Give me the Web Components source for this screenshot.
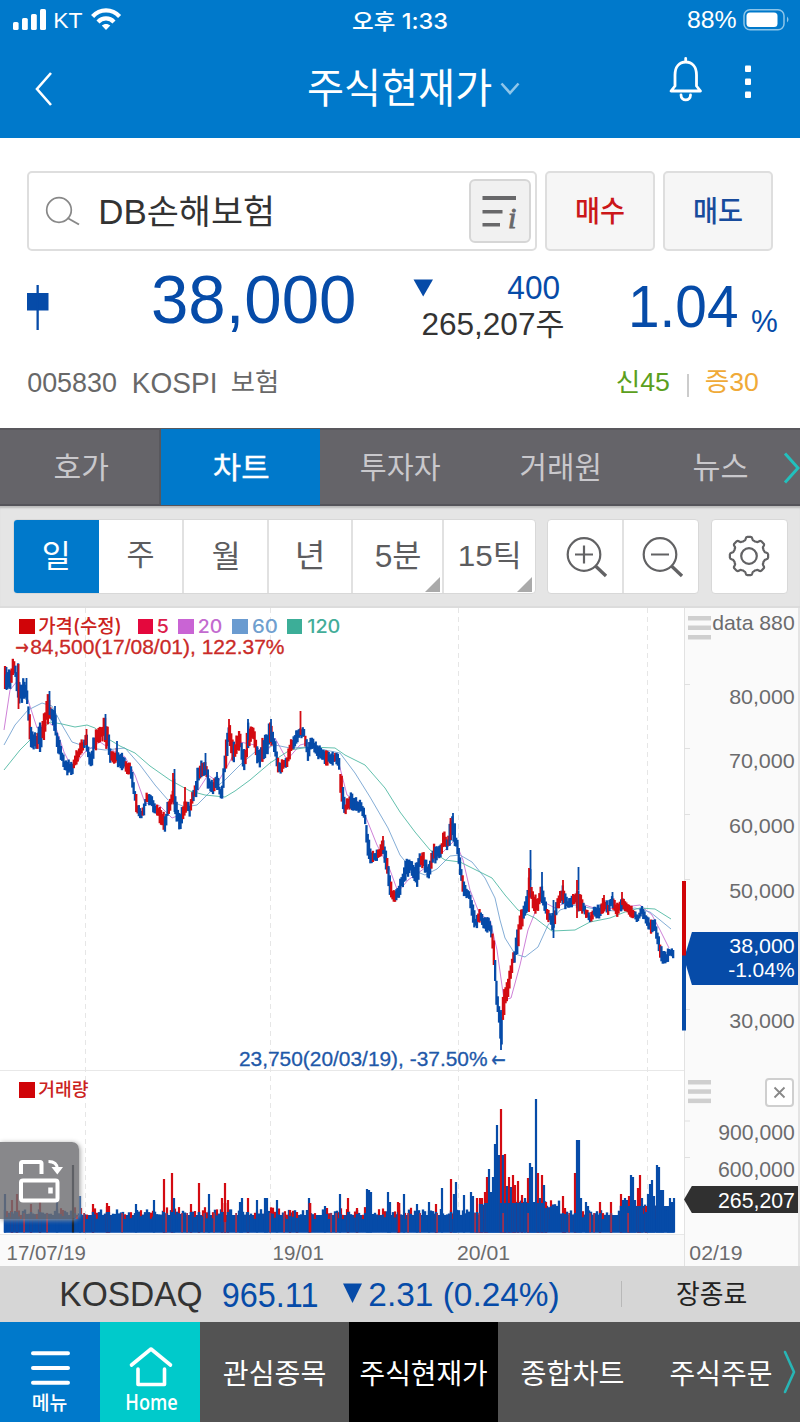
<!DOCTYPE html>
<html lang="ko">
<head>
<meta charset="utf-8">
<title>주식현재가</title>
<style>
html,body{margin:0;padding:0;background:#fff}
body{width:800px;height:1422px;overflow:hidden;font-family:"Liberation Sans","Noto Sans CJK KR",sans-serif;color:#333}
</style>
</head>
<body>
<stock-app></stock-app>
<script>
const element = (name, html, setup) => {
  const tpl = document.createElement('template');
  tpl.innerHTML = html;
  customElements.define(name, class extends HTMLElement {
    constructor() {
      super();
      this.attachShadow({ mode: 'open' }).appendChild(tpl.content.cloneNode(true));
    }
    connectedCallback() { if (setup) setup(this, this.shadowRoot); }
  });
};
const ctx = document.createElement('canvas').getContext('2d');

/* Label whose layout box is the visible extent of its glyphs.
   w/h: glyph extent, dx/dy: distance from the preceding item and from the row's top. */
element('ink-label', `
<style>
:host{display:block;flex:none;overflow:visible}
span{display:block;white-space:pre;width:max-content;transform-origin:0 0;line-height:1}
i{display:inline-block;width:0;height:0}
</style><span><i></i><slot></slot></span>`, (host, root) => {
  const a = n => parseFloat(host.getAttribute(n) || 0);
  const span = root.querySelector('span'), cs = getComputedStyle(host), text = host.textContent;
  ctx.font = `${cs.fontStyle} ${cs.fontWeight} 100px ${cs.fontFamily}`;
  const m = ctx.measureText(text), w = a('w'), h = a('h');
  const size = h / (m.actualBoundingBoxAscent + m.actualBoundingBoxDescent) * 100;
  const inkW = (m.actualBoundingBoxLeft + m.actualBoundingBoxRight) * size / 100;
  host.style.width = w + 'px';
  host.style.height = h + 'px';
  if (host.hasAttribute('dx')) host.style.marginLeft = a('dx') + 'px';
  if (host.hasAttribute('dy')) host.style.marginTop = a('dy') + 'px';
  span.style.fontSize = size + 'px';
  const base = root.querySelector('i').getBoundingClientRect().bottom - span.getBoundingClientRect().top;
  const s = w / inkW;
  span.style.transform = `translate(${m.actualBoundingBoxLeft * size / 100 * s}px,${m.actualBoundingBoxAscent * size / 100 - base}px) scaleX(${s})`;
});

element('app-header', `
<style>
:host{display:flex;flex-direction:column;height:138px;background:#0079cb;color:#fff}
.status,.title{display:flex;align-items:flex-start;height:40px}
.title{height:98px}
svg{flex:none;display:block}
</style>
<div class="status">
<svg width="50" height="40" fill="#fff"><rect x="13" y="22" width="5.6" height="8" rx="1.6"/><rect x="22" y="18" width="5.8" height="12" rx="1.6"/><rect x="31" y="14" width="5.8" height="16" rx="1.6"/><rect x="40" y="9" width="6" height="21" rx="1.6"/></svg>
<ink-label w="27" h="15.5" dx="5" dy="12.5">KT</ink-label>
<svg width="32" height="40" style="margin-left:8px" fill="none" stroke="#fff" stroke-width="4.2"><path d="M2.6 16.5C10 8.3 22 8.3 29.600 16.500"/><path d="M8 22C12.500 17.300 19.500 17.300 24 22"/><path d="M11.800 25.600C14 23.300 18.200 23.300 20.300 25.600L16 30Z" fill="#fff" stroke="none"/></svg>
<ink-label w="94" h="20.500" dx="231" dy="10" style="font-family:Inter,'Noto Sans CJK KR',sans-serif;font-weight:500">오후 1:33</ink-label>
<ink-label w="48" h="16.500" dx="241" dy="12">88%</ink-label>
<svg width="56" height="40" style="margin-left:6px"><rect x="2" y="9.800" width="40" height="20" rx="6" fill="none" stroke="#8cc5e9" stroke-width="1.500"/><rect x="4.500" y="12.500" width="31" height="14.500" rx="3.500" fill="#fff"/><path d="M45 16.500q3 3 0 6z" fill="#8cc5e9"/></svg>
</div>
<div class="title">
<svg width="60" height="98" fill="none" stroke="#fff" stroke-width="2.600"><path d="M51 33L37 49L51 65"/></svg>
<ink-label w="182" h="38" dx="249" dy="29" style="font-family:'Noto Sans CJK KR',sans-serif;font-weight:400">주식현재가</ink-label>
<svg width="30" height="98" style="margin-left:4px" fill="none" stroke="#8fc6ea" stroke-width="2.600"><path d="M6.500 43.500L15 53L23.500 43.500"/></svg>
<svg width="50" height="98" style="margin-left:135px" fill="none" stroke="#fff" stroke-width="2.800" stroke-linecap="round" stroke-linejoin="round"><path d="M25.700 18.500V22M11 51H40.500L36.500 46V35C36.500 26.500 32 22 25.700 22C19.500 22 15 26.500 15 35V46Z"/><path d="M21 55C21 61.500 30.500 61.500 30.500 55"/></svg>
<svg width="40" height="98" style="margin-left:25px" fill="#fff"><rect x="10" y="25.500" width="6" height="6.500" rx="1"/><rect x="10" y="38.500" width="6" height="6.500" rx="1"/><rect x="10" y="51.500" width="6" height="6.500" rx="1"/></svg>
</div>`);

element('quote-panel', `
<style>
:host{display:flex;flex-direction:column;height:290px;background:#fff;color:#333}
.search{display:flex;gap:8px;margin:33px 0 0 27px;height:80px;width:746px}
.box,.btn{box-sizing:border-box;border:2px solid #dedede;border-radius:5px;display:flex;align-items:flex-start;font-weight:500}
.box{width:510.500px;font-weight:400}
.btn{width:110px;background:#f6f6f6;justify-content:center;align-items:center}
.info{box-sizing:border-box;width:62px;height:64px;margin:6px 0 0 197.500px;border:2px solid #d6d6d6;border-radius:6px;background:#f1f1f1;flex:none}
.price{display:flex;align-items:flex-start;height:109px;padding-left:27px;color:#064ba8}
.mid{width:150px;height:70px;margin-left:58.500px;flex:none}
.line{display:flex;align-items:flex-start;height:36px}
.meta{display:flex;align-items:flex-start;color:#686868;height:60px;padding-left:28px}
svg{display:block;flex:none}
.sep{width:2px;height:23px;background:#ccc;margin:14px 0 0 17.500px}
</style>
<div class="search">
<div class="box">
<svg width="56" height="70" fill="none" stroke="#888" stroke-width="1.700"><circle cx="30" cy="37" r="12.300"/><path d="M38.500 45L50 51.500" stroke-width="2"/></svg>
<ink-label w="170" h="32" dx="16" dy="22" style="font-weight:400">DB손해보험</ink-label>
<div class="info"><svg width="58" height="60" fill="#68686a"><rect x="11.500" y="15" width="33.500" height="4"/><rect x="11.500" y="29" width="20" height="3.500"/><rect x="11.500" y="42" width="17.500" height="3.500"/><text x="37" y="46.500" font-family="Liberation Serif" font-style="italic" font-weight="400" font-size="30" stroke="#68686a" stroke-width=".9">i</text></svg></div>
</div>
<div class="btn"><ink-label w="47" h="27" style="color:#cb1719">매수</ink-label></div>
<div class="btn"><ink-label w="47" h="27" style="color:#184b9c">매도</ink-label></div>
</div>
<div class="price">
<svg width="22" height="90" fill="#064ba8"><rect x="0" y="42" width="21.500" height="17.500"/><rect x="9.500" y="34" width="2.300" height="45"/></svg>
<ink-label w="201" h="57" dx="104" dy="24">38,000</ink-label>
<div class="mid"><div class="line"><svg width="20" height="50" fill="#064ba8"><path d="M.5 28.500H20L10.200 45.500Z"/></svg><ink-label w="51" h="23" dx="75" dy="25">400</ink-label></div>
<div class="line"><ink-label w="140" h="28" dx="10.500" dy="24" style="color:#333">265,207주</ink-label></div></div>
<ink-label w="105" h="42.500" dx="69.500" dy="34">1.04</ink-label>
<ink-label w="25" h="22.500" dx="14.500" dy="58.500">%</ink-label>
</div>
<div class="meta">
<ink-label w="88" h="20" dy="12.300">005830</ink-label>
<ink-label w="81" h="21" dx="18" dy="11.500">KOSPI</ink-label>
<ink-label w="44" h="23" dx="17" dy="10">보험</ink-label>
<ink-label w="52" h="23" dx="341" dy="10" style="color:#5b9f20">신45</ink-label>
<div class="sep"></div>
<ink-label w="52" h="23" dx="17.500" dy="10" style="color:#f0aa38">증30</ink-label>
</div>`);

element('section-tabs', `
<style>
:host{display:grid;grid-template-columns:161px 159px 160px 160px 160px;height:78px;background:#656469;color:#c9c8cc;position:relative;box-sizing:border-box;border-top:2px solid #59585d;border-bottom:2px solid #55545a;font-family:"Noto Sans CJK KR",sans-serif}
div{display:flex;align-items:center;justify-content:center}
.on{background:#0079cb;color:#fff;margin:-1px 0;font-weight:400}
svg{position:absolute;right:0;top:22px}
</style>
<div style="border-right:2px solid #59585d;box-sizing:border-box;padding-left:4px"><ink-label w="53" h="28">호가</ink-label></div>
<div class="on"><ink-label w="54" h="28" style="-webkit-text-stroke:.4px #fff">차트</ink-label></div>
<div><ink-label w="79" h="28">투자자</ink-label></div>
<div><ink-label w="78" h="28">거래원</ink-label></div>
<div><ink-label w="53" h="27">뉴스</ink-label></div>
<svg width="17" height="34" fill="none" stroke="#22c0bd" stroke-width="3"><path d="M2 1.500L15 16L2 30.500"/></svg>`);

element('chart-toolbar', `
<style>
:host{display:flex;height:102px;background:#e5e5e5;color:#5c5c5e;box-sizing:border-box;padding:12.500px 0 0 13px;border-bottom:2px solid #dcdcdc;box-shadow:inset 0 3px 2px -1px #bbb;font-family:"Liberation Sans","Noto Sans CJK KR",sans-serif}
.g{display:flex;height:75.500px;box-sizing:border-box;border:1.500px solid #d8d8d8;border-radius:4px;background:#fff;overflow:hidden}
.g>div{display:flex;align-items:center;justify-content:center;border-right:2px solid #e1e1e1;box-sizing:border-box;position:relative;height:100%}
.g>div:last-child{border-right:0}
.g .on{background:#0079cb;color:#fff;border-color:#0079cb}
.m::after{content:"";position:absolute;right:2px;bottom:1.500px;border:solid transparent;border-width:0 0 15.500px 15.500px;border-bottom-color:#aaa}
ink-label{position:relative;top:-1px}
svg{display:block;fill:none;stroke:#626264;stroke-width:2.200}
.z svg{margin:3px 0 0 4px}
</style>
<div class="g" style="width:523px">
<div class="on" style="width:85px"><ink-label w="24" h="28">일</ink-label></div>
<div style="width:85px"><ink-label w="25" h="26">주</ink-label></div>
<div style="width:84.500px"><ink-label w="24.500" h="28">월</ink-label></div>
<div style="width:84.500px"><ink-label w="24" h="28">년</ink-label></div>
<div class="m" style="width:91px"><ink-label w="44" h="27">5분</ink-label></div>
<div class="m" style="width:90px"><ink-label w="58" h="28">15틱</ink-label></div>
</div>
<div class="g z" style="width:152px;margin-left:11px">
<div style="width:75.500px"><svg width="44" height="44"><circle cx="19" cy="18.500" r="16.300"/><path d="M30.500 30L41 40" stroke-width="3.300"/><path d="M10 18.500H28M19 9.500V27.500"/></svg></div>
<div style="width:74px"><svg width="44" height="44"><circle cx="19" cy="18.500" r="16.300"/><path d="M30.500 30L41 40" stroke-width="3.300"/><path d="M10 18.500H28"/></svg></div>
</div>
<div class="g" style="width:77px;margin-left:12px"><div style="width:74px"><svg class="gear" width="44" height="44"><path stroke-linejoin="round"/><circle cx="22" cy="22" r="7.800"/></svg></div></div>`,
(host, root) => {
  let d = '';
  for (let i = 0; i < 8; i++) {
    const pt = (deg, r) => { const t = (i * 45 + deg - 90) * Math.PI / 180; return (22 + r * Math.cos(t)).toFixed(2) + ' ' + (22 + r * Math.sin(t)).toFixed(2); };
    d += (i ? 'L' : 'M') + pt(-11, 17.500) + 'Q' + pt(-9, 19.200) + ' ' + pt(-5, 19.200) + 'L' + pt(5, 19.200) + 'Q' + pt(9, 19.200) + ' ' + pt(11, 17.500) + 'Q' + pt(13, 15.800) + ' ' + pt(18, 16) + 'Q' + pt(22.500, 15.300) + ' ' + pt(27, 16) + 'Q' + pt(32, 15.800) + ' ' + pt(34, 17.500);
  }
  root.querySelector('.gear path').setAttribute('d', d + 'Z');
});

/* x high low : daily range of the price, in chart pixels */
const RANGE = `5 667 692 8 670 690 11 668 688 13 656 680 15 660 675 18 664 708 20 675 705 24 680 708 26 678 700 28 695 718 30 712 745 33 735 752 37 730 752 40 722 753 43 718 745 46 700 730 49 692 720 52 710 723 55 707 735 57 730 750 61 745 760 65 760 772 69 757 776 72 762 777 76 752 768 80 742 758 84 738 752 86 730 745 89 745 765 91 752 770 94 735 758 97 728 745 101 727 740 104 715 745 107 722 750 110 742 762 113 750 768 117 745 765 120 753 770 124 753 770 127 760 773 131 765 780 134 778 800 137 800 815 141 810 822 144 800 815 147 792 803 151 795 808 155 803 815 158 805 818 162 810 830 165 815 833 168 800 818 171 792 808 174 775 812 177 805 822 180 812 832 183 800 822 187 800 810 190 805 818 192 790 810 196 775 798 199 760 785 203 762 778 205 755 775 208 770 790 211 780 797 214 778 795 217 773 788 220 785 798 222 785 803 224 760 785 226 728 770 229 720 740 232 730 765 235 740 765 238 728 750 240 730 750 243 745 770 245 750 770 248 720 755 251 721 745 254 728 742 257 740 765 259 750 768 263 735 762 267 730 755 270 720 748 272 722 745 275 740 755 277 750 770 280 760 778 283 758 770 287 755 770 290 738 758 293 735 752 297 728 742 300 726 740 304 728 740 308 745 762 311 730 750 315 740 755 319 745 760 325 750 765 330 753 765 335 752 765 339 755 770 341 770 805 345 802 815 351 792 810 356 798 810 362 800 815 365 812 822 367 830 857 372 850 865 376 850 862 380 845 857 383 836 855 387 855 880 390 875 895 393 890 903 398 887 900 402 870 890 406 857 880 410 860 873 413 862 878 417 862 887 420 850 870 424 853 870 428 865 880 430 860 875 434 842 865 438 845 860 441 842 858 444 830 850 448 838 850 450 820 845 453 812 840 456 832 850 459 850 865 461 865 885 465 885 900 469 892 900 472 898 920 475 915 932 480 905 922 483 918 930 487 915 932 490 920 935 493 932 952 495 955 985 497 985 1015 499 1000 1022 501 1012 1050 503 990 1033 505 985 1003 508 975 1000 511 965 980 513 952 968 515 945 965 517 930 958 520 910 935 523 908 925 526 898 915 528 880 910 530 868 898 532 885 905 535 895 915 538 895 910 541 880 900 543 885 905 547 905 922 550 910 925 553 915 937 557 895 912 560 890 908 563 885 905 565 893 908 568 900 910 573 895 908 575 890 905 577 888 912 579 885 910 582 892 915 586 908 918 590 915 923 594 905 918 600 905 918 604 895 912 608 903 915 612 892 908 617 903 917 622 895 910 627 903 912 631 905 918 635 910 920 638 915 922 642 905 915 646 915 925 650 920 932 655 920 935 658 935 945 660 940 958 663 952 966 667 950 964 670 947 957 674 950 961`.split(' ').map(Number);
const SPIKES = [[6.5,667,690,1],[18.5,664,709,0],[26.5,678,700,1],[49.500,691,715,1],[55,706,730,1],[86.500,729,745,0],[105.500,714,740,1],[117,741,760,1],[174.500,769,812,1],[173,773,800,0],[185,787,805,0],[205.500,753,775,1],[217,772,790,1],[229,719,740,0],[248,719,740,1],[271,719,742,1],[300.500,711,735,0],[383,836,850,0],[453,813,835,1],[450.500,818,840,0],[501,1010,1050,1],[530.500,850,880,1],[529,868,912,0],[542,872,890,1],[553.500,900,938,1],[563,880,900,0],[578.500,867,890,1],[577,880,918,0],[604,895,910,0],[612.500,892,908,1],[622,892,905,0]];
const MA = {
'#c66bd0':'4,730 10,690 18,680 28,700 37,728 48,722 56,728 64,752 72,768 85,752 100,742 112,750 125,757 135,775 145,803 160,806 172,818 185,813 195,795 208,775 218,782 228,765 240,742 255,745 265,755 275,738 287,760 300,745 312,742 325,755 338,760 347,795 360,803 367,820 377,845 390,870 398,892 408,880 425,868 440,855 455,840 463,860 470,890 480,915 490,920 497,950 504,1000 511,998 520,965 528,930 540,900 555,908 570,900 600,910 640,905 652,915 660,930 669,948',
'#6f9fcf':'4,745 15,725 28,710 42,703 52,706 62,725 72,742 90,748 105,750 125,748 140,765 155,785 168,800 185,807 197,805 210,792 225,780 240,765 255,752 275,745 290,748 310,747 325,750 340,753 355,773 370,797 388,828 400,855 412,870 425,875 437,869 450,856 460,855 472,862 485,878 495,898 500,920 505,938 515,954 525,957 538,947 548,925 560,910 575,905 595,909 615,911 635,908 650,912 660,920 671,929',
'#48b59f':'4,770 20,750 35,735 50,722 62,724 75,727 87,725 95,728 105,737 120,746 135,753 150,766 170,780 190,791 205,795 225,797 235,791 250,780 270,763 290,750 310,747 335,748 345,755 365,765 385,788 400,812 415,832 430,850 445,860 460,862 478,871 492,878 505,895 518,910 535,918 552,931 575,930 590,922 610,918 625,912 640,908 655,909 671,919'};
/* x top colour(1 blue, 0 red, 2 dark) of the outstanding volume bars */
const VOL = `5 1194 1 12 1200 0 17 1194 0 31 1204 0 40 1202 0 57 1201 1 73 1165 2 80 1196 1 93 1204 0 107 1203 0 109 1206 0 136 1204 1 154 1200 1 164 1179 0 172 1173 0 174 1198 1 191 1204 0 199 1183 0 209 1194 1 222 1198 0 225 1183 0 228 1200 0 242 1198 1 240 1202 1 248 1198 0 257 1200 1 265 1198 1 267 1198 1 277 1200 1 290 1210 0 297 1212 0 309 1198 1 325 1206 1 340 1194 1 348 1198 0 357 1208 0 367 1189 1 369 1190 1 371 1192 1 388 1192 1 390 1202 1 398 1202 0 404 1194 1 417 1204 1 429 1202 1 436 1204 0 442 1188 1 451 1179 0 454 1194 1 456 1182 1 464 1195 1 471 1192 1 473 1196 1 477 1198 0 480 1198 0 482 1198 0 485 1192 0 487 1177 0 489 1169 1 491 1192 1 493 1177 1 495 1144 1 497 1125 1 499 1155 1 501 1109 0 503 1155 1 505 1154 0 507 1186 1 509 1177 0 511 1187 1 513 1175 0 515 1185 0 518 1181 0 522 1195 0 525 1198 1 528 1178 0 530 1163 1 532 1167 1 534 1205 1 536 1099 1 538 1173 0 540 1198 1 542 1175 0 544 1185 1 546 1202 0 563 1196 0 565 1208 0 575 1173 0 577 1140 1 579 1140 1 581 1198 1 586 1202 1 588 1206 1 600 1202 0 611 1202 0 621 1194 0 623 1200 1 625 1198 1 627 1200 1 629 1196 0 631 1175 1 633 1177 1 635 1200 1 638 1188 0 640 1175 0 642 1198 1 646 1206 0 648 1194 1 650 1184 1 652 1180 1 654 1196 1 657 1165 1 659 1167 1 661 1190 1 663 1190 1 668 1206 1 670 1198 1 672 1202 1 674 1198 1`.split(' ').map(Number);

element('price-chart', `
<style>
:host{display:grid;grid-template-columns:684px 116px;height:658px;position:relative;color:#6b6b6d;background:#fff}
.plot svg.data{display:block}
.axis{background:#fafafa;box-sizing:border-box;border-left:1px solid #e2e2e2;display:flex;flex-direction:column;align-items:flex-end;border-right:2px solid #e4e4e4;padding-right:4px}
.abs{position:absolute}
.legend{position:absolute;left:19px;top:9px;display:flex;align-items:flex-start;font-family:Inter,"Noto Sans CJK KR",sans-serif;font-weight:500}
.legend b{width:15.500px;height:15.500px;margin-top:1.500px;flex:none}
.note{-webkit-text-stroke:.3px currentColor}
.tag{box-sizing:border-box;width:114px;margin-right:-4px;padding-right:4px;color:#fff;display:flex;flex-direction:column;align-items:flex-end;flex:none;clip-path:polygon(0 50%,8px 0,100% 0,100% 100%,8px 100%);position:relative}
.dates{position:absolute;left:0;top:627px;width:800px;height:31px;display:flex;align-items:flex-start}
.turn{position:absolute;left:0;top:534px;width:79px;height:77px;background:rgba(110,110,113,.82);border-radius:0 7px 7px 0;box-shadow:1px 1px 5px #999}
</style>
<div class="plot"><svg class="data" width="684" height="658" viewBox="0 608 684 658"></svg></div>
<div class="axis">
<ink-label w="81" h="14.500" dy="7.500">data 880</ink-label>
<ink-label w="64" h="17.500" dy="58.500">80,000</ink-label>
<ink-label w="64" h="17.500" dy="46.500">70,000</ink-label>
<ink-label w="64" h="17.500" dy="48">60,000</ink-label>
<ink-label w="64" h="17.500" dy="47.700">50,000</ink-label>
<div class="tag" style="background:#064ba8;height:53.500px;margin-top:31px"><ink-label w="64" h="17.500" dy="6">38,000</ink-label><ink-label w="65" h="14.500" dy="8">-1.04%</ink-label></div>
<ink-label w="64" h="17.500" dy="28">30,000</ink-label>
<svg width="29" height="29" style="margin-top:47px;flex:none"><rect x="1" y="1" width="27" height="27" rx="3" fill="#fff" stroke="#cfcfcf" stroke-width="2"/><path d="M9.500 9.500L19.500 19.500M19.500 9.500L9.500 19.500" stroke="#888" stroke-width="1.800"/></svg>
<ink-label w="75" h="18" dy="18">900,000</ink-label>
<ink-label w="75" h="18" dy="19">600,000</ink-label>
<div class="tag" style="background:#303030;height:27.500px;margin-top:6px"><ink-label w="75" h="18" dy="7.500">265,207</ink-label></div>
</div>
<svg class="abs" style="left:680px;top:0" width="34" height="658" viewBox="680 608 34 658"><g fill="#cfcfcf"><rect x="688" y="616" width="23" height="4.500"/><rect x="688" y="625.500" width="23" height="4.500"/><rect x="688" y="635" width="23" height="4.500"/><rect x="688" y="1080" width="23" height="4.500"/><rect x="688" y="1089.300" width="23" height="4.500"/><rect x="688" y="1098.600" width="23" height="4.500"/></g><path d="M684 684.500h6M684 748.500h6M684 814.500h6M684 879.500h6M684 1009.500h6M684 1121h6M684 1157.500h6" stroke="#e0e0e0"/><rect x="682" y="881" width="4" height="75" fill="#d00408"/><rect x="682" y="955.500" width="4" height="75" fill="#064ba8"/></svg>
<div class="legend">
<b style="background:#d00408"></b><ink-label w="81" h="19" dx="4.500" style="color:#cb2220">가격(수정)</ink-label>
<b style="background:#e4083d;margin-left:17.500px"></b><ink-label w="10" h="13.500" dx="5" dy="2.500" style="color:#dc1d4b">5</ink-label>
<b style="background:#c964d4;margin-left:10px"></b><ink-label w="22.500" h="13.500" dx="5" dy="2.500" style="color:#c36bcf">20</ink-label>
<b style="background:#6a9bd0;margin-left:11px"></b><ink-label w="24" h="13.500" dx="5" dy="2.500" style="color:#709fcf">60</ink-label>
<b style="background:#3cae98;margin-left:10px"></b><ink-label w="31.500" h="13.500" dx="5.500" dy="2.500" style="color:#43ad99">120</ink-label>
</div>
<div class="legend note" style="left:16px;top:32px;color:#ca2a27;font-family:'Liberation Sans'"><ink-label w="12" h="9" dy="3" style="font-family:'DejaVu Sans'">→</ink-label><ink-label w="253" h="18.500" dx="3">84,500(17/08/01), 122.37%</ink-label></div>
<div class="legend note" style="left:240px;top:444px;color:#1f59a9;font-family:'Liberation Sans'"><ink-label w="247" h="18.500">23,750(20/03/19), -37.50%</ink-label><ink-label w="13" h="9.500" dx="5" dy="4" style="font-family:'DejaVu Sans'">←</ink-label></div>
<div class="legend" style="top:472.500px"><b style="background:#d00408"></b><ink-label w="49" h="17" dx="4.500" style="color:#cb2220">거래량</ink-label></div>
<div class="dates"><ink-label w="77" h="15.500" dx="7.500" dy="10">17/07/19</ink-label><ink-label w="49" h="15.500" dx="189.500" dy="10">19/01</ink-label><ink-label w="51" h="15.500" dx="135" dy="10">20/01</ink-label><ink-label w="51.500" h="15.500" dx="181" dy="10">02/19</ink-label></div>
<div class="turn"><svg width="79" height="77" fill="none" stroke="#fff" stroke-width="4" stroke-linejoin="round"><path d="M21 32V21.500Q21 20 22.500 20H40Q41.500 20 41.500 21.500V32"/><rect x="21" y="38.500" width="36.500" height="20" rx="2"/><path d="M50.500 45.500v6" stroke-width="4.500"/><path d="M48.500 19.500Q57 19.500 57.500 27" stroke-width="3"/><path d="M51.500 25H63L57.300 32.500Z" fill="#fff" stroke="none"/></svg></div>`,
(host, root) => {
  let seed = 11;
  const rnd = () => (seed = (seed * 16807) % 2147483647) / 2147483647;
  const B = '#064ba8', R = '#d30b12';
  const bar = (x, a, b, c, w = 2) => `<rect x="${(x - w / 2).toFixed(1)}" y="${a.toFixed(1)}" width="${w}" height="${Math.max(1, b - a).toFixed(1)}" fill="${c}"/>`;
  let s = '<rect x="0" y="1234" width="684" height="32" fill="#fafafa"/><path d="M0 1070.500H684M0 1234.500H684" stroke="#e8e8e8"/><path d="M85.500 608V1240M270.500 608V1240M458.500 608V1240M647.500 608V1240" stroke="#e6e6e6" stroke-dasharray="5 4"/>';
  let i = 0, prev = 680, red = false;
  for (const c in MA) s += `<polyline points="${MA[c]}" fill="none" stroke="${c}" stroke-width="1" opacity=".85" stroke-linejoin="round"/>`;
  for (let x = 5; x <= 674; x += 1.3) {
    while (i < RANGE.length - 6 && x > RANGE[i + 3]) i += 3;
    const t = Math.min(1, (x - RANGE[i]) / (RANGE[i + 3] - RANGE[i]));
    const hi = RANGE[i + 1] + t * (RANGE[i + 4] - RANGE[i + 1]), lo = RANGE[i + 2] + t * (RANGE[i + 5] - RANGE[i + 2]);
    const span = lo - hi, a = hi + rnd() * span * .36 - 1, b = lo - rnd() * span * .36 + 1, mid = (hi + lo) / 2;
    if (rnd() < .6) red = rnd() < (mid < prev - .8 ? .62 : .16);
    s += bar(x, a, b, red ? R : B, 2.3);
    prev = mid;
  }
  for (const [x, a, b, c] of SPIKES) s += bar(x, a, b, c ? B : R, 1.8);
  const base = 1232.5;
  const lvl = x => x < 480 ? 1212 : x < 560 ? 1203 : x < 620 ? 1213 : 1206;
  s += `<rect x="4" y="1215" width="670.5" height="17.500" fill="${B}"/><rect x="484" y="1202" width="62" height="30" fill="${B}"/><rect x="622" y="1206" width="52.500" height="26" fill="${B}"/>`;
  for (let x = 5; x <= 674; x += 2) {
    const top = lvl(x) - 3 + rnd() * 8, q = rnd();
    if (q < .24) s += bar(x, top - 2, 1219, R, 2.2) + bar(x, top + 4, base, B, 2.2);
    else s += bar(x, top, base, B, 2.4);
  }
  for (let k = 0; k < VOL.length; k += 3) {
    const x = VOL[k], y = VOL[k + 1], c = VOL[k + 2];
    s += bar(x, y, base, c === 0 ? R : c === 1 ? B : '#1a2330', 2.2);
    if (c === 0) s += bar(x, Math.max(y + 6, lvl(x)), base, B, 2.3);
  }
  for (const x of [24, 47, 84, 122, 166, 182, 187, 204, 214, 225, 236, 270, 284, 331, 336, 408, 420, 437, 475, 479, 503, 528, 569, 590, 594, 611, 628]) s += `<rect x="${x - .8}" y="1213" width="1.8" height="19.5" fill="#9d3150"/>`;
  for (const x of [225, 310, 399]) s += bar(x, 1203, x === 225 ? 1222 : base, R, 2.6);
  root.querySelector('.data').innerHTML = s;
});

element('index-ticker', `
<style>
:host{display:flex;align-items:flex-start;height:56px;background:#d6d6d6;color:#064ba8;font-family:"Liberation Sans","Noto Sans CJK KR",sans-serif}
svg{display:block;flex:none}
i{display:block;width:1.500px;height:26px;background:#b8b8b8;margin:15px 0 0 62.500px}
</style>
<ink-label w="139" h="31" dx="62" dy="15.500" style="color:#333">KOSDAQ</ink-label>
<ink-label w="94" h="25" dx="22" dy="16">965.11</ink-label>
<svg width="19" height="50" style="margin-left:25.500px" fill="#064ba8"><path d="M0 17.500H19L9.500 37Z"/></svg>
<ink-label w="188" h="31" dx="8.500" dy="15.500">2.31 (0.24%)</ink-label>
<i></i>
<ink-label w="69" h="24.500" dx="54.500" dy="16" style="color:#222">장종료</ink-label>`);

element('bottom-nav', `
<style>
:host{display:grid;grid-template-columns:100px 100px 149px 149px 302px;height:100px;background:#535353;color:#fff;position:relative;font-family:"Noto Sans CJK KR",sans-serif}
div{display:flex;align-items:flex-start}
.i{flex-direction:column;align-items:center;font-weight:500}
svg{display:block;flex:none;fill:none;stroke:#fff;stroke-width:4.300;stroke-linecap:round;stroke-linejoin:round}
.more{position:absolute;right:0;top:25px;stroke:#28b5b5;stroke-width:2.600}
</style>
<div class="i" style="background:#0079cb"><svg width="100" height="70"><path d="M33 31.200H68M33 46H68M33 60.800H68" stroke-width="4"/></svg><ink-label w="33.500" h="18.500" dy="1">메뉴</ink-label></div>
<div class="i" style="background:#00cacb"><svg width="100" height="72"><path d="M31.500 43L51 27L70.500 43M38 47V62.500H64.500V47" stroke-width="3.600"/></svg><ink-label w="50" h="15.500" dx="3" dy="1" style="font-family:'Open Sans';font-weight:600">Home</ink-label></div>
<div><ink-label w="101" h="26" dx="24" dy="39">관심종목</ink-label></div>
<div style="background:#000"><ink-label w="126" h="26" dx="12" dy="39">주식현재가</ink-label></div>
<div><ink-label w="101" h="26" dx="24" dy="39">종합차트</ink-label><ink-label w="100" h="26" dx="48" dy="39">주식주문</ink-label></div>
<svg class="more" width="18" height="50"><path d="M3 5L12 25L3 45"/></svg>`);

element('stock-app', `
<style>:host{display:flex;flex-direction:column;width:800px;height:1422px;overflow:hidden}</style>
<app-header></app-header>
<quote-panel></quote-panel>
<section-tabs></section-tabs>
<chart-toolbar></chart-toolbar>
<price-chart></price-chart>
<index-ticker></index-ticker>
<bottom-nav></bottom-nav>`);
</script>
</body>
</html>
